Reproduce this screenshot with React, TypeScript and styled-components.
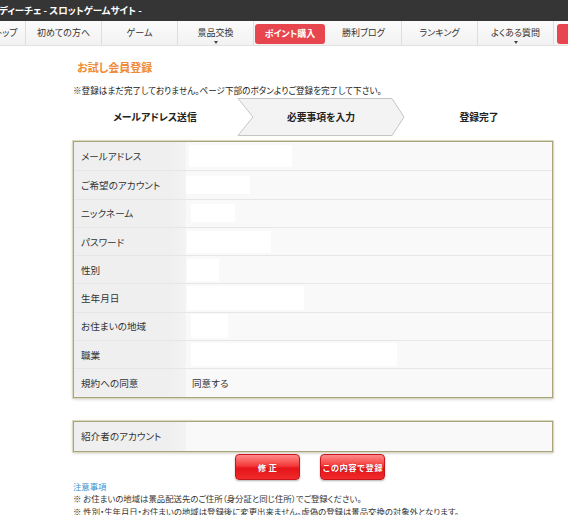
import React from "react"
import styled, { createGlobalStyle } from "styled-components"

// Global
const GlobalStyle = createGlobalStyle`
  html, body {
    margin: 0;
    padding: 0;
    background: #fff;
    overflow: hidden;
  }
  body {
    font-family: "Noto Sans CJK JP", "Noto Sans", sans-serif;
    font-feature-settings: "palt";
    color: #333;
  }
`

// Header
const TopBar = styled.div`
  height: 21px;
  background: #353535;
  color: #fff;
  font-size: 9.5px;
  font-weight: 700;
  line-height: 21px;
  white-space: nowrap;
  overflow: hidden;
  text-indent: -1px;
`

const Nav = styled.nav`
  display: flex;
  height: 24px;
  background: linear-gradient(#fbfbfb, #f2f2f2);
  border-bottom: 1px solid #e2e2e2;
  margin-left: -12px;
  white-space: nowrap;
`

const NavItem = styled.div<{ $w: number }>`
  position: relative;
  flex: 0 0 ${p => p.$w}px;
  display: flex;
  align-items: center;
  justify-content: center;
  padding-bottom: 2px;
  font-size: 9px;
  color: #333;
  border-right: 1px solid #dedede;
  box-sizing: border-box;
`

const NavArrow = styled.span`
  position: absolute;
  left: 50%;
  bottom: 1px;
  margin-left: -2px;
  border-left: 2px solid transparent;
  border-right: 2px solid transparent;
  border-top: 3px solid #444;
`

const NavButtonSlot = styled.div<{ $w: number; $pl: number }>`
  flex: 0 0 ${p => p.$w}px;
  display: flex;
  align-items: center;
  padding: 2px 1px 1px ${p => p.$pl}px;
  box-sizing: border-box;
`

const NavButton = styled.div`
  flex: 1;
  height: 20px;
  border-radius: 3px;
  background: #e8464f;
  color: #fff;
  font-size: 9px;
  font-weight: 700;
  display: flex;
  align-items: center;
  justify-content: center;
  overflow: hidden;
`

// Content
const Main = styled.main`
  width: 480px;
  margin-left: 73px;
  padding-top: 14px;
`

const Heading = styled.h2`
  margin: 0 0 0 4px;
  font-size: 11px;
  line-height: 14px;
  font-weight: 700;
  color: #ee8a38;
`

const Notice = styled.p`
  margin: 10px 0 0;
  font-size: 8.6px;
  line-height: 12px;
  color: #222;
  white-space: nowrap;
`

const Steps = styled.div`
  display: grid;
  grid-template-columns: 164px 168px 1fr;
  height: 38px;
  margin-top: 2px;
`

const Step = styled.div`
  position: relative;
  display: flex;
  align-items: center;
  justify-content: center;
  font-size: 9.8px;
  font-weight: 700;
  color: #222;
`

const StepLabel = styled.span`
  position: relative;
`

const Chevron = styled.svg`
  position: absolute;
  inset: 0;
  width: 100%;
  height: 100%;
`

const Table = styled.div`
  margin-top: 5px;
  border: 1px solid #a8a47c;
  box-shadow: 0 0 0 1px #dcd9c2, 0 1px 3px rgba(0, 0, 0, 0.25);
  background: #f9f9f9;
`

const Row = styled.div`
  display: grid;
  grid-template-columns: 112px 1fr;
  height: 28.3px;
  border-top: 1px solid #e6e6e6;
  box-sizing: border-box;
  &:first-child {
    border-top: none;
  }
`

const Label = styled.div`
  display: flex;
  align-items: center;
  padding-left: 7px;
  background: linear-gradient(90deg, #efefef 85%, #f3f3f3);
  font-size: 9.6px;
  color: #333;
`

const Value = styled.div`
  display: flex;
  align-items: center;
  padding-left: 6px;
  font-size: 9.6px;
  color: #333;
`

const Redacted = styled.span<{ $w: number; $h: number; $x: number }>`
  display: block;
  width: ${p => p.$w}px;
  height: ${p => p.$h}px;
  margin-left: ${p => p.$x}px;
  background: #fff;
`

const ReferrerTable = styled(Table)`
  margin-top: 23px;
`

const ReferrerRow = styled(Row)`
  height: 29px;
`

const Buttons = styled.div`
  display: flex;
  justify-content: center;
  gap: 20px;
  margin-top: 2px;
  padding-right: 6px;
`

const RedButton = styled.button`
  width: 65px;
  height: 26px;
  border: 1px solid #c8141a;
  border-radius: 4px;
  background: linear-gradient(#ff8a8a 0%, #f43a3a 45%, #e5141a 55%, #f02a2a 100%);
  box-shadow: 0 1px 2px rgba(0, 0, 0, 0.3);
  color: #fff;
  font-family: inherit;
  font-size: 8.4px;
  font-weight: 700;
  letter-spacing: 0.3px;
  padding: 0;
  text-shadow: 0 0 1px rgba(120, 0, 0, 0.6);
`

const Notes = styled.div`
  margin-top: 0;
  font-size: 8.4px;
  line-height: 12.5px;
  color: #333;
  white-space: nowrap;
`

const NotesTitle = styled.div`
  color: #3a8fc9;
`

// Data
const navItems: { label: string; w: number; arrow?: boolean; button?: boolean; pl?: number }[] = [
  { label: "トップ", w: 38 },
  { label: "初めての方へ", w: 76 },
  { label: "ゲーム", w: 76 },
  { label: "景品交換", w: 76, arrow: true },
  { label: "ポイント購入", w: 72, button: true, pl: 1 },
  { label: "勝利ブログ", w: 76 },
  { label: "ランキング", w: 76 },
  { label: "よくある質問", w: 76, arrow: true },
  { label: "", w: 72, button: true, pl: 3 },
]

const rows: { label: string; red?: [number, number, number]; text?: string }[] = [
  { label: "メールアドレス", red: [103, 22, -3] },
  { label: "ご希望のアカウント", red: [64, 18, -6] },
  { label: "ニックネーム", red: [44, 18, -1] },
  { label: "パスワード", red: [84, 22, -5] },
  { label: "性別", red: [32, 22, -5] },
  { label: "生年月日", red: [117, 24, -5] },
  { label: "お住まいの地域", red: [37, 24, -1] },
  { label: "職業", red: [206, 23, -1] },
  { label: "規約への同意", text: "同意する" },
]

const App: React.FC = () => {
  return (
    <>
      <GlobalStyle />
      <TopBar>ディーチェ - スロットゲームサイト -</TopBar>
      <Nav>
        {navItems.map((item, i) =>
          item.button ? (
            <NavButtonSlot key={i} $w={item.w} $pl={item.pl ?? 1}>
              <NavButton>{item.label}</NavButton>
            </NavButtonSlot>
          ) : (
            <NavItem key={i} $w={item.w}>
              {item.label}
              {item.arrow && <NavArrow />}
            </NavItem>
          )
        )}
      </Nav>

      <Main>
        <Heading>お試し会員登録</Heading>
        <Notice>※登録はまだ完了しておりません。ページ下部のボタンよりご登録を完了して下さい。</Notice>

        <Steps>
          <Step>
            <StepLabel>メールアドレス送信</StepLabel>
          </Step>
          <Step>
            <Chevron viewBox="0 0 168 38" preserveAspectRatio="none">
              <polygon
                points="1,0.5 155,0.5 167,19 155,37.5 1,37.5 16,19"
                fill="#f3f3f3"
                stroke="#c4c4c4"
                strokeWidth="1"
              />
            </Chevron>
            <StepLabel>必要事項を入力</StepLabel>
          </Step>
          <Step>
            <StepLabel>登録完了</StepLabel>
          </Step>
        </Steps>

        <Table>
          {rows.map(row => (
            <Row key={row.label}>
              <Label>{row.label}</Label>
              <Value>
                {row.red ? <Redacted $w={row.red[0]} $h={row.red[1]} $x={row.red[2]} /> : row.text}
              </Value>
            </Row>
          ))}
        </Table>

        <ReferrerTable>
          <ReferrerRow>
            <Label>紹介者のアカウント</Label>
            <Value />
          </ReferrerRow>
        </ReferrerTable>

        <Buttons>
          <RedButton>修 正</RedButton>
          <RedButton>この内容で登録</RedButton>
        </Buttons>

        <Notes>
          <NotesTitle>注意事項</NotesTitle>
          <div>※ お住まいの地域は景品配送先のご住所（身分証と同じ住所）でご登録ください。</div>
          <div>※ 性別・生年月日・お住まいの地域は登録後に変更出来ません。虚偽の登録は景品交換の対象外となります。</div>
        </Notes>
      </Main>
    </>
  )
}

export default App
